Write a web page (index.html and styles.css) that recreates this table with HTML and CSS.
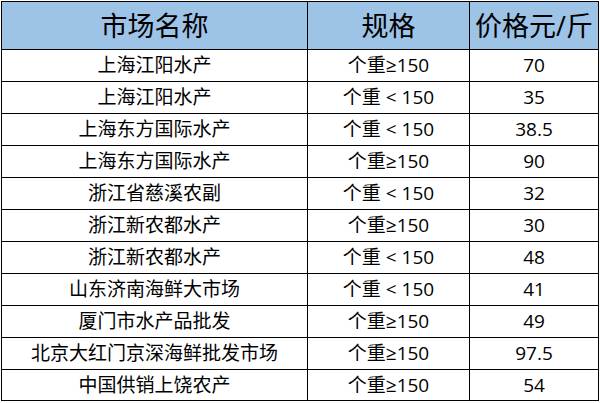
FILE: index.html
```html
<!DOCTYPE html>
<html lang="zh-CN">
<head>
<meta charset="utf-8">
<title>水产价格</title>
<link rel="stylesheet" href="styles.css">
</head>
<body>
<div class="sheet">
  <div class="cell head">市场名称</div><div class="cell head">规格</div><div class="cell head">价格元/斤</div>
  <div class="cell">上海江阳水产</div><div class="cell">个重≥150</div><div class="cell">70</div>
  <div class="cell">上海江阳水产</div><div class="cell">个重 &lt; 150</div><div class="cell">35</div>
  <div class="cell">上海东方国际水产</div><div class="cell">个重 &lt; 150</div><div class="cell">38.5</div>
  <div class="cell">上海东方国际水产</div><div class="cell">个重≥150</div><div class="cell">90</div>
  <div class="cell">浙江省慈溪农副</div><div class="cell">个重 &lt; 150</div><div class="cell">32</div>
  <div class="cell">浙江新农都水产</div><div class="cell">个重≥150</div><div class="cell">30</div>
  <div class="cell">浙江新农都水产</div><div class="cell">个重 &lt; 150</div><div class="cell">48</div>
  <div class="cell">山东济南海鲜大市场</div><div class="cell">个重 &lt; 150</div><div class="cell">41</div>
  <div class="cell">厦门市水产品批发</div><div class="cell">个重≥150</div><div class="cell">49</div>
  <div class="cell">北京大红门京深海鲜批发市场</div><div class="cell">个重≥150</div><div class="cell">97.5</div>
  <div class="cell">中国供销上饶农产</div><div class="cell">个重≥150</div><div class="cell">54</div>
</div>
</body>
</html>
```

FILE: styles.css
```css
html, body {
  margin: 0;
  padding: 0;
  background: #ffffff;
}

body {
  padding: 1px 0 0 1px;
  font-family: "Open Sans", "Noto Sans CJK SC", sans-serif;
  color: #000000;
}

.sheet {
  display: grid;
  width: max-content;
  grid-template-columns: 305px 161px 128px;
  grid-template-rows: 47px repeat(10, 31px) 30px;
  gap: 1px;
  padding: 1px;
  background: #000000;
}

.cell {
  background: #ffffff;
  display: flex;
  align-items: center;
  justify-content: center;
  font-size: 19px;
  line-height: 1;
  white-space: pre;
}

.head {
  background: #9dc3e6;
  font-size: 27px;
}
```
